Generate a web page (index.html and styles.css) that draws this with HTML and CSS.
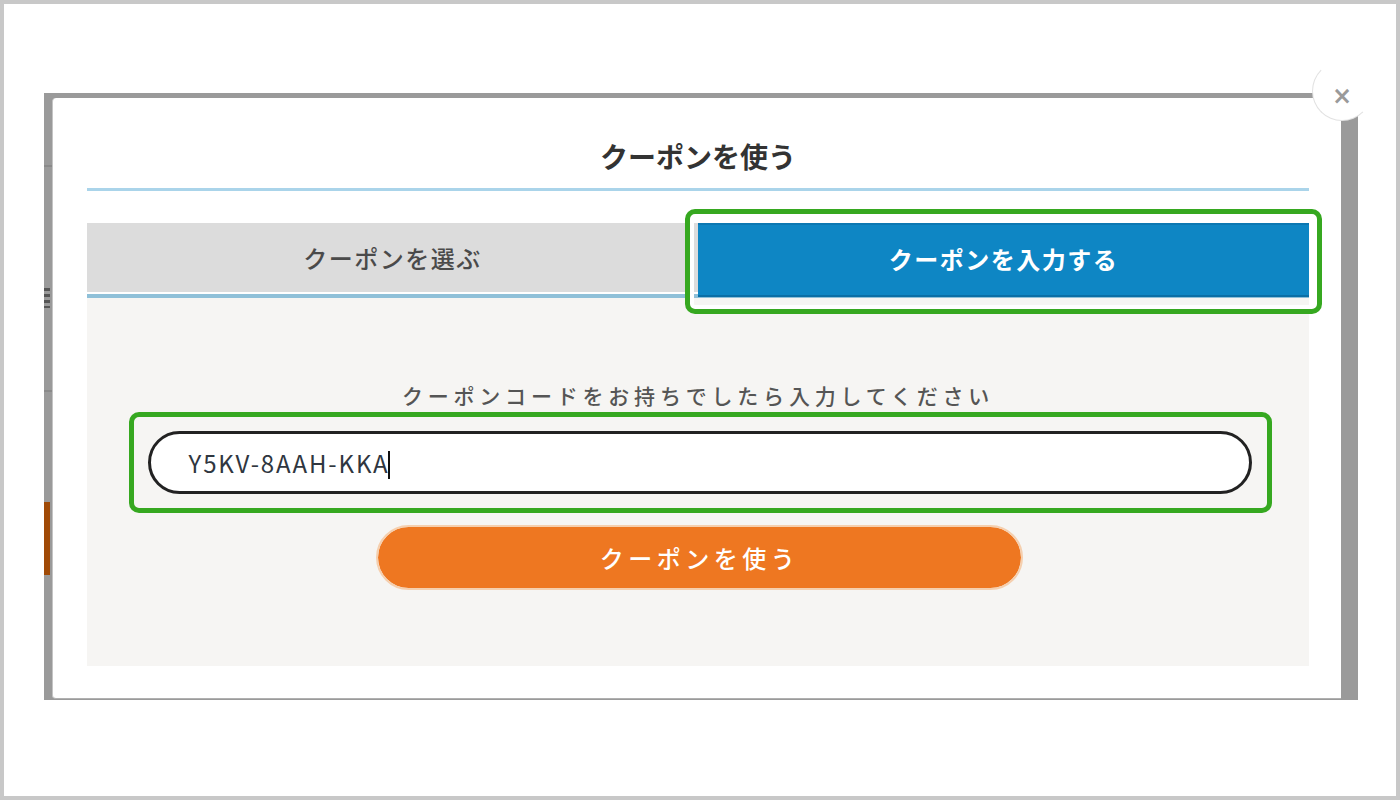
FILE: index.html
```html
<!DOCTYPE html>
<html lang="ja">
<head>
  <meta charset="UTF-8">
  <meta name="viewport" content="width=device-width, initial-scale=1.0">
  <title>クーポンを使う</title>
  <link rel="stylesheet" href="styles.css">
</head>
<body>

  <div class="frame">
    <div class="overlay">

      <!-- 背後のページの端 -->
      <div class="peek">
        <div class="peek-line first"></div>
        <div class="peek-mark"></div>
        <div class="peek-line second"></div>
        <div class="peek-button"></div>
      </div>

      <div class="modal">
        <div class="modal-close">&times;</div>

        <h1 class="modal-title">クーポンを使う</h1>

        <!-- タブ -->
        <div class="tabs">
          <div class="tab">クーポンを選ぶ</div>
          <div class="tab active">クーポンを入力する</div>
          <div class="mark mark-tab"></div>
        </div>

        <!-- 入力パネル -->
        <div class="panel">
          <p class="panel-label">クーポンコードをお持ちでしたら入力してください</p>
          <div class="field-wrap">
            <div class="field">Y5KV-8AAH-KKA<span class="caret"></span></div>
            <div class="mark mark-field"></div>
          </div>
          <button class="use-button">クーポンを使う</button>
        </div>
      </div>

    </div>
  </div>

</body>
</html>
```

FILE: styles.css
```css
body {
  margin: 0;
  font-family: "Noto Sans CJK JP", "Noto Sans", sans-serif;
}

.frame {
  width: 1400px;
  height: 800px;
  box-sizing: border-box;
  border: 4px solid #c8c8c8;
  background-color: #fff;
  padding: 89px 0 0 40px;
}

.overlay {
  display: flex;
  width: 1314px;
  height: 607px;
  background-color: #9a9a9a;
}

/* 背後のページ */
.peek {
  width: 8px;
  display: flex;
  flex-direction: column;
}

.peek-line {
  height: 2px;
  background-color: #8a8a8a;
}

.peek-line.first {
  margin-top: 72px;
}

.peek-mark {
  margin-top: 121px;
  width: 6px;
  height: 20px;
  background: repeating-linear-gradient(#555 0 3px, #9a9a9a 3px 6px);
}

.peek-line.second {
  margin-top: 82px;
}

.peek-button {
  margin-top: 110px;
  width: 6px;
  height: 73px;
  background-color: #a04a06;
}

.modal {
  position: relative;
  width: 1289px;
  height: 601px;
  box-sizing: border-box;
  margin-top: 5px;
  padding: 0 32px 32px 34px;
  background-color: #fff;
  border-left: 1px solid #c4c4c4;
  border-bottom: 1px solid #b0b0b0;
  border-radius: 4px 0 0 4px;
  display: flex;
  flex-direction: column;
}

.modal-close {
  position: absolute;
  top: -37px;
  right: -31px;
  width: 60px;
  height: 60px;
  box-sizing: border-box;
  border-radius: 50%;
  background-color: #fff;
  border: 1px solid #e2e2e2;
  border-top-color: transparent;
  border-right-color: transparent;
  color: #9a9a9a;
  font-family: "DejaVu Sans", sans-serif;
  font-size: 24px;
  font-weight: bold;
  text-align: center;
  line-height: 68px;
}

.modal-title {
  margin: 0;
  padding: 38px 0 11px;
  height: 41px;
  line-height: 41px;
  font-size: 28px;
  font-weight: bold;
  color: #333;
  text-align: center;
  border-bottom: 3px solid #aad4ea;
}

.tabs {
  position: relative;
  display: flex;
  margin-top: 32px;
  border-bottom: 4px solid #8fc0d8;
}

.tab {
  flex: 1;
  height: 69px;
  line-height: 69px;
  text-align: center;
  background-color: #dcdcdc;
  color: #4a4a4a;
  font-size: 24px;
  font-weight: 500;
  letter-spacing: 1.5px;
}

.tab.active {
  background-color: #0e86c4;
  color: #fff;
  font-weight: bold;
  border-top: 2px solid #0c78b2;
  height: 70px;
  line-height: 68px;
  margin-bottom: -3px;
  border-bottom: 2px solid #0a6fa6;
}

/* 緑の注釈枠 */
.mark {
  position: absolute;
  border: 5px solid #36a820;
  border-radius: 10px;
  box-shadow: inset 0 0 0 4px #fff;
}

.mark-tab {
  top: -14px;
  left: 598px;
  right: -13px;
  bottom: -20px;
}

.panel {
  flex: 1;
  background-color: #f6f5f3;
  display: flex;
  flex-direction: column;
  align-items: center;
  padding-top: 82px;
}

.panel-label {
  margin: 0;
  height: 30px;
  line-height: 30px;
  font-size: 21px;
  font-weight: 500;
  letter-spacing: 4.8px;
  color: #555;
}

.field-wrap {
  position: relative;
  margin-top: 21px;
  margin-left: 3px;
}

.field {
  width: 1104px;
  height: 63px;
  box-sizing: border-box;
  border: 3px solid #222;
  border-radius: 32px;
  background-color: #fff;
  padding-left: 38px;
  line-height: 57px;
  font-size: 24px;
  color: #2f3640;
  letter-spacing: 1.9px;
}

.caret {
  display: inline-block;
  width: 2px;
  height: 28px;
  margin-left: -2px;
  vertical-align: -6px;
  background-color: #111;
}

.mark-field {
  top: -19px;
  left: -19px;
  right: -20px;
  bottom: -19px;
  box-shadow: none;
}

.use-button {
  margin-top: 31px;
  margin-left: 3px;
  width: 647px;
  height: 65px;
  border: 2px solid #f5cfae;
  border-radius: 33px;
  background-color: #ee7721;
  background-clip: padding-box;
  color: #fff;
  font-family: "Noto Sans CJK JP", sans-serif;
  font-size: 24px;
  font-weight: 500;
  letter-spacing: 4.5px;
}
```
